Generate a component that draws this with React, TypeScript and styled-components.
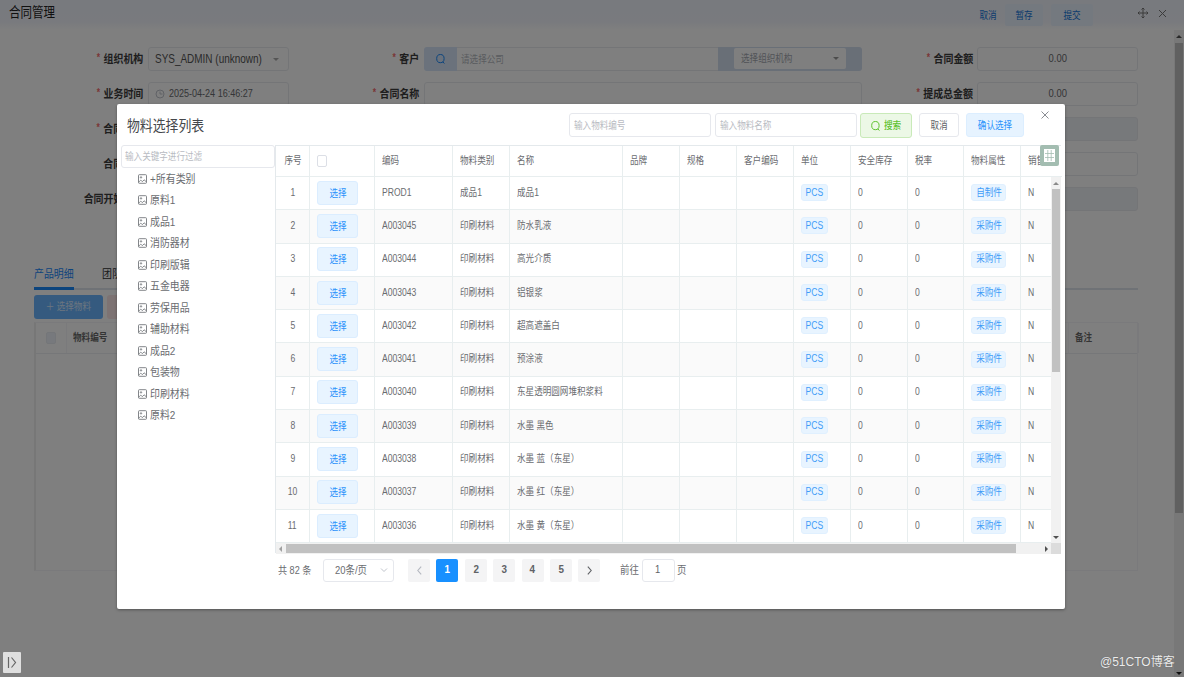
import React from 'react';
import styled, { createGlobalStyle } from 'styled-components';

const Global = createGlobalStyle`
  * { box-sizing: border-box; }
  html, body { margin: 0; padding: 0; overflow: hidden; background: #808080; }
  body { font-family: "Liberation Sans", "Noto Sans CJK SC", sans-serif; color: #6a6c70; }
`;

const T = styled.span<{ $s?: number; $c?: string; $o?: string; $w?: number; $x?: number; $dy?: number }>`
  flex: none;
  display: block;
  white-space: nowrap;
  font-size: ${p => p.$s ?? 10}px;
  line-height: 1.2;
  font-weight: ${p => p.$w ?? 400};
  color: ${p => p.$c ?? 'inherit'};
  transform: translateY(${p => p.$dy ?? 0}px) scaleX(${p => p.$x ?? 0.857});
  transform-origin: ${p => p.$o ?? 'left'} center;
`;

const Screen = styled.div`
  position: relative;
  width: 1184px;
  height: 677px;
  overflow: hidden;
  background: #fff;
`;
const Page = styled.div`display: flex; flex-direction: column; height: 677px;`;
const TopBar = styled.header`
  height: 30px;
  flex: none;
  display: flex;
  align-items: center;
  padding: 0 14px 4px 9px;
  background: linear-gradient(#f0f4fc 0, #f2f5fc 22px, #fff 30px);
  color: #222;
`;
const Grow = styled.div`flex: 1;`;
const BarButton = styled.div<{ $w: number; $bg?: string; $ml?: number }>`
  width: ${p => p.$w}px;
  height: 22px;
  margin: 4px 0 0 ${p => p.$ml ?? 0}px;
  display: flex;
  align-items: center;
  justify-content: center;
  border-radius: 2px;
  background: ${p => p.$bg ?? 'transparent'};
  color: #1477dc;
`;
const BarIcon = styled.svg<{ $ml: number; $mr?: number }>`
  margin-left: ${p => p.$ml}px; margin-right: ${p => p.$mr ?? 0}px; flex: none; display: block;
`;
const Body = styled.div`flex: 1; display: flex; min-height: 0;`;
const Content = styled.div`width: 1174px; padding: 17px 36px 0 34px;`;
const FormGrid = styled.div`
  display: grid;
  grid-template-columns: 255px 573px 276px;
  grid-auto-rows: 35px;
  height: 205px;
`;
const Field = styled.div`display: flex; height: 24px;`;
const FieldLabel = styled.div<{ $w: number; $end?: number }>`
  width: ${p => p.$w}px;
  padding-right: ${p => p.$end ?? 5}px;
  flex: none;
  display: flex;
  align-items: center;
  justify-content: flex-end;
  color: #3c3c3c;
  i { color: #f56c6c; font-style: normal; margin-right: 4px; font-size: 10px; position: relative; top: -2px; }
`;
const Box = styled.div<{ $w: number; $off?: boolean; $center?: boolean }>`
  width: ${p => p.$w}px;
  height: 24px;
  border: 1px solid #e9ebef;
  border-radius: 3px;
  background: ${p => (p.$off ? '#eff2f7' : '#fff')};
  display: flex;
  align-items: center;
  justify-content: ${p => (p.$center ? 'center' : 'flex-start')};
  padding: 0 6px;
`;
const SelectText = styled.div`width: 112px; display: flex; margin-right: 6px;`;
const TimeText = styled.div`margin-left: 4px;`;
const SearchAddon = styled.div`
  width: 33px; height: 24px; background: #d6e4f8; border-radius: 3px 0 0 3px;
  display: flex; align-items: center; justify-content: center;
`;
const GroupInput = styled.div`
  width: 261px; height: 24px; border: 1px solid #e9ebef; border-width: 1px 0; padding-left: 4px;
  display: flex; align-items: center;
`;
const GroupAppend = styled.div`
  width: 144px; height: 24px; padding: 1px 16px; background: #d3deef; border-radius: 0 3px 3px 0;
`;
const GroupSelect = styled.div`
  width: 112px; height: 21px; background: #fff; display: flex; align-items: center;
  justify-content: space-between; padding: 0 7px; border-radius: 2px; overflow: hidden;
`;
const Tabs = styled.div`
  display: flex; height: 38px; border-bottom: 2px solid #dfe4ed; align-items: stretch;
`;
const Tab = styled.div<{ $on?: boolean }>`
  width: 40px;
  height: 38px;
  margin-right: 28px;
  display: flex;
  align-items: center;
  padding-top: 8px;
  border-bottom: 3px solid ${p => (p.$on ? '#1989fa' : 'transparent')};
  color: ${p => (p.$on ? '#1989fa' : '#303133')};
`;
const Actions = styled.div`display: flex; gap: 4px; padding: 5px 0 3px;`;
const PageButton = styled.div<{ $w: number; $bg: string }>`
  width: ${p => p.$w}px; height: 24px; border-radius: 3px; background: ${p => p.$bg};
  display: flex; align-items: center; justify-content: center; color: #d8eaff;
`;
const DetailTable = styled.div`height: 249px; border: 1px solid #f4f5f8; border-left: 2px solid #efefef; width: 1104px;`;
const DetailHead = styled.div`
  display: grid; grid-template-columns: 31px 1002px 70px; height: 31px; border-bottom: 1px solid #eceef2; color: #6a6a6a;
`;
const DetailCell = styled.div<{ $mid?: boolean }>`
  display: flex; align-items: center; padding-left: ${p => (p.$mid ? 0 : 6)}px;
  justify-content: ${p => (p.$mid ? 'center' : 'flex-start')};
  border-right: 1px solid #f4f5f8; overflow: hidden;
`;
const Check = styled.span<{ $grey?: boolean }>`
  width: 10px; height: 12px; border: 1px solid ${p => (p.$grey ? '#e9ecf2' : '#dcdfe6')}; border-radius: 2px;
  background: ${p => (p.$grey ? '#eff3fa' : '#fff')};
`;
const PageScroll = styled.div`
  width: 10px; background: #f1f1f1; display: flex; flex-direction: column; align-items: center;
  justify-content: space-between; padding: 4px 1px 1px; 
`;
const PageThumb = styled.div`width: 8px; height: 470px; background: #c1c1c1; margin-bottom: auto; margin-top: 4px;`;

const Shade = styled.div`position: absolute; inset: 0; background: rgba(0, 0, 0, 0.5);`;
const Dialog = styled.section`
  position: absolute;
  left: 117px;
  top: 104px;
  width: 948px;
  height: 505px;
  background: #fff;
  border-radius: 2px;
  box-shadow: 0 1px 3px rgba(0, 0, 0, 0.35);
  display: flex;
  flex-direction: column;
`;
const DialogHead = styled.div`height: 41px; display: flex; padding: 9px 15px 0 10px; flex: none;`;
const DialogTitle = styled.div`width: 442px; height: 25px; display: flex; align-items: center; color: #45474b;`;
const Input = styled.div<{ $w: number; $h?: number; $mr?: number; $pl?: number }>`
  width: ${p => p.$w}px; height: ${p => p.$h ?? 24}px; margin-right: ${p => p.$mr ?? 0}px;
  border: 1px solid #e6e8ed; border-radius: 3px; padding-left: ${p => p.$pl ?? 4}px;
  display: flex; align-items: center; color: #b8bbc2; flex: none;
`;
const Button = styled.div<{ $w: number; $bg: string; $bd: string; $c: string; $mr?: number; $h?: number }>`
  width: ${p => p.$w}px; height: ${p => p.$h ?? 24}px; margin-right: ${p => p.$mr ?? 0}px;
  background: ${p => p.$bg}; border: 1px solid ${p => p.$bd}; color: ${p => p.$c};
  border-radius: 3px; display: flex; align-items: center; justify-content: center; flex: none;
`;
const SearchLabel = styled.div`display: flex; align-items: center; gap: 4px; width: 31px;`;
const Close = styled.svg`display: block; margin: -2px 0 0 17px; flex: none;`;
const DialogBody = styled.div`display: flex; padding-left: 4px; flex: 1;`;
const Side = styled.aside`width: 154px; flex: none;`;
const Tree = styled.ul`list-style: none; margin: 0; padding: 0 0 0 17px;`;
const TreeItem = styled.li`height: 21.5px; display: flex; align-items: center; gap: 3px; color: #6a6c70;`;
const Main = styled.div`width: 786px;`;
const TableFrame = styled.div`
  position: relative; height: 408px; border-left: 1px solid #e4e9ec; border-top: 1px solid #e4e9ec;
`;
const cols = '34px 65px 78px 57px 113px 57px 57px 57px 57px 57px 56px 57px';
const Row = styled.div<{ $odd?: boolean; $head?: boolean }>`
  display: grid;
  grid-template-columns: ${cols} ${p => (p.$head ? 41 : 31)}px;
  height: ${p => (p.$head ? 31 : 33.3)}px;
  background: ${p => (p.$odd ? '#fafafa' : '#fff')};
  color: #6a6c70;
`;
const Cell = styled.div<{ $mid?: boolean; $last?: boolean }>`
  display: flex;
  align-items: center;
  padding: 0 ${p => (p.$mid ? 0 : 7)}px 1px;
  justify-content: ${p => (p.$mid ? 'center' : 'flex-start')};
  border-right: ${p => (p.$last ? 0 : 1)}px solid #e8eeef;
  border-bottom: 1px solid #e8eeef;
  overflow: hidden;
`;
const Tag = styled.span<{ $w: number }>`
  width: ${p => p.$w}px; height: 17px; background: #e8f4ff; border: 1px solid #e0f0ff; border-radius: 3px;
  display: flex; align-items: center; justify-content: center; color: #3f9cf8;
`;
const Scroller = styled.div`display: flex; height: 366px;`;
const Rows = styled.div`width: 775px;`;
const VBar = styled.div`
  width: 10px; background: #f1f1f1; display: flex; flex-direction: column; align-items: center; padding: 4px 0 3px;
`;
const VThumb = styled.div`width: 8px; height: 183px; background: #c1c1c1; margin: 3px 0 auto;`;
const HBar = styled.div`height: 11px; background: #f1f1f1; display: flex; align-items: center; padding-left: 2px;`;
const HThumb = styled.div`width: 730px; height: 9px; background: #c1c1c1; margin: 0 28px 0 3px;`;
const Corner = styled.div`width: 10px; height: 11px; background: #dcdcdc; margin-left: auto;`;
const ColumnTool = styled.div`
  position: absolute; left: 764px; top: -1px; width: 19px; height: 21px; border-radius: 2px; background: #a3bdb1;
  display: flex; align-items: center; justify-content: center;
`;
const Pager = styled.div`display: flex; height: 24px; margin-top: 5px; padding-left: 3px; align-items: center; color: #6a6c70;`;
const PagerText = styled.div<{ $w: number; $ml?: number }>`
  width: ${p => p.$w}px; margin-left: ${p => p.$ml ?? 0}px; display: flex; flex: none;
`;
const SizeSelect = styled.div`
  width: 71px; height: 23px; border: 1px solid #e6e8ed; border-radius: 3px; margin-right: 14px;
  display: flex; align-items: center; justify-content: space-between; padding: 0 5px 0 11px; flex: none;
`;
const PageNo = styled.div<{ $on?: boolean }>`
  width: 22px; height: 23px; margin-right: 6.4px; border-radius: 2px; flex: none;
  background: ${p => (p.$on ? '#1890ff' : '#f4f4f5')}; color: ${p => (p.$on ? '#fff' : '#606266')};
  display: flex; align-items: center; justify-content: center;
`;
const Expand = styled.div`
  position: absolute; left: 3px; top: 652px; width: 18px; height: 21px; background: #dfdfdf; border-radius: 1px;
  display: flex; align-items: center; justify-content: center;
`;
const Watermark = styled.div`position: absolute; left: 1100px; top: 655px; color: #ececec; text-shadow: 0 0 1px #555;`;

const ArrowMark = styled.svg`flex: none; display: block;`;
const Arrow = ({ d, c = '#505050' }: { d: 'u' | 'd' | 'l' | 'r'; c?: string }) => {
  const path = { u: 'M0 4L3 1L6 4Z', d: 'M0 1L3 4L6 1Z', l: 'M4 0L1 3L4 6Z', r: 'M1 0L4 3L1 6Z' }[d];
  const flat = d === 'u' || d === 'd';
  return (
    <ArrowMark width={flat ? 6 : 5} height={flat ? 5 : 6}>
      <path d={path} fill={c} />
    </ArrowMark>
  );
};
const Chevron = ({ d, c = '#606266', s = 8 }: { d: string; c?: string; s?: number }) => (
  <svg width={s} height={s} viewBox="0 0 8 8" fill="none" stroke={c} strokeWidth="1">
    <path d={d} />
  </svg>
);
const IconSlot = styled.svg`flex: none; display: block;`;
const Magnifier = ({ c }: { c: string }) => (
  <IconSlot width="9" height="10" viewBox="0 0 9 10" fill="none" stroke={c} strokeWidth="1">
    <ellipse cx="4.4" cy="4.6" rx="3.7" ry="4.1" />
    <path d="M6.8 7.7L8.4 9.6" />
  </IconSlot>
);
const Picture = () => (
  <IconSlot width="9" height="10" viewBox="0 0 9 10" fill="none" stroke="#75787d" strokeWidth="0.9">
    <rect x="0.5" y="0.7" width="8" height="8.6" rx="0.8" />
    <circle cx="3" cy="3.4" r="0.7" />
    <path d="M0.8 8.4C2 6 3 5.8 4.4 7.6L6.1 5.8L8.3 7.8" />
  </IconSlot>
);

const Label = ({ w, text, req, end }: { w: number; text: string; req?: boolean; end?: number }) => (
  <FieldLabel $w={w} $end={end}>
    <T $s={11.6} $w={700} $o="right">{req && <i>*</i>}{text}</T>
  </FieldLabel>
);

const tree = ['+所有类别', '原料1', '成品1', '消防器材', '印刷版辑', '五金电器', '劳保用品', '辅助材料', '成品2', '包装物', '印刷材料', '原料2'];
const heads = ['编码', '物料类别', '名称', '品牌', '规格', '客户编码', '单位', '安全库存', '税率', '物料属性', '销售'];
const rows: [string, string, string, string][] = [
  ['PROD1', '成品1', '成品1', '自制件'],
  ['A003045', '印刷材料', '防水乳液', '采购件'],
  ['A003044', '印刷材料', '高光介质', '采购件'],
  ['A003043', '印刷材料', '铝银浆', '采购件'],
  ['A003042', '印刷材料', '超高遮盖白', '采购件'],
  ['A003041', '印刷材料', '预涂液', '采购件'],
  ['A003040', '印刷材料', '东星透明圆网堆积浆料', '采购件'],
  ['A003039', '印刷材料', '水墨 黑色', '采购件'],
  ['A003038', '印刷材料', '水墨 蓝（东星）', '采购件'],
  ['A003037', '印刷材料', '水墨 红（东星）', '采购件'],
  ['A003036', '印刷材料', '水墨 黄（东星）', '采购件'],
];

const ContractPage = () => (
  <Page>
    <TopBar>
      <T $s={13.4}>合同管理</T>
      <Grow />
      <BarButton $w={34}><T $o="center" $dy={1}>取消</T></BarButton>
      <BarButton $w={38} $bg="#e9f2fe"><T $o="center" $dy={1}>暂存</T></BarButton>
      <BarButton $w={42} $bg="#e9f2fe" $ml={8}><T $o="center" $dy={1}>提交</T></BarButton>
      <BarIcon $ml={44} width="12" height="12" viewBox="0 0 12 12" fill="none" stroke="#777" strokeWidth="1">
        <path d="M6 1V11M1 6H11M4.5 2.5L6 1L7.5 2.5M4.5 9.5L6 11L7.5 9.5M2.5 4.5L1 6L2.5 7.5M9.5 4.5L11 6L9.5 7.5" />
      </BarIcon>
      <BarIcon $ml={9} $mr={3} width="9" height="9" viewBox="0 0 9 9" stroke="#777" strokeWidth="1">
        <path d="M1 1L8 8M8 1L1 8" />
      </BarIcon>
    </TopBar>
    <Body>
      <Content>
        <FormGrid>
          <Field>
            <Label w={114} text="组织机构" req />
            <Box $w={142}><SelectText><T $s={12} $x={0.83} $c="#555">SYS_ADMIN (unknown)</T></SelectText><Arrow d="d" c="#aaa" /></Box>
          </Field>
          <Field>
            <Label w={135} text="客户" req />
            <SearchAddon><Magnifier c="#1989fa" /></SearchAddon>
            <GroupInput><T $c="#b4b8c0" $dy={1}>请选择公司</T></GroupInput>
            <GroupAppend><GroupSelect><T $c="#a4a8b0">选择组织机构</T><Arrow d="d" c="#999" /></GroupSelect></GroupAppend>
          </Field>
          <Field><Label w={115} text="合同金额" req end={4} /><Box $w={161} $center><T $s={11} $o="center">0.00</T></Box></Field>

          <Field>
            <Label w={114} text="业务时间" req />
            <Box $w={142}>
              <IconSlot width="10" height="10" viewBox="0 0 10 10" fill="none" stroke="#c0c4cc"><circle cx="5" cy="5" r="4" /><path d="M5 2.5V5H7.5" /></IconSlot>
              <TimeText><T $s={11} $x={0.82}>2025-04-24 16:46:27</T></TimeText>
            </Box>
          </Field>
          <Field><Label w={135} text="合同名称" req /><Box $w={438} /></Field>
          <Field><Label w={115} text="提成总金额" req end={4} /><Box $w={161} $center><T $s={11} $o="center">0.00</T></Box></Field>

          <Field><Label w={114} text="合同" req end={25} /></Field>
          <Field />
          <Field><Label w={117} text="" /><Box $w={159} $off /></Field>
          <Field><Label w={114} text="合同" end={25} /></Field>
          <Field />
          <Field><Label w={117} text="" /><Box $w={159} /></Field>
          <Field><Label w={114} text="合同开始" end={25} /></Field>
          <Field />
          <Field><Label w={117} text="" /><Box $w={159} $off /></Field>
        </FormGrid>
        <Tabs>
          <Tab $on><T $s={11.6}>产品明细</T></Tab>
          <Tab><T $s={11.6}>团队</T></Tab>
        </Tabs>
        <Actions>
          <PageButton $w={69} $bg="#6bb5ff"><T $o="center">＋ 选择物料</T></PageButton>
          <PageButton $w={50} $bg="#fbe6e6" />
        </Actions>
        <DetailTable>
          <DetailHead>
            <DetailCell $mid><Check $grey /></DetailCell>
            <DetailCell><T $w={700}>物料编号</T></DetailCell>
            <DetailCell><T $w={700}>备注</T></DetailCell>
          </DetailHead>
        </DetailTable>
      </Content>
      <PageScroll><Arrow d="u" /><PageThumb /><Arrow d="d" c="#222" /></PageScroll>
    </Body>
  </Page>
);

export default function App() {
  return (
    <Screen>
      <Global />
      <ContractPage />
      <Shade />
      <Dialog>
        <DialogHead>
          <DialogTitle><T $s={15}>物料选择列表</T></DialogTitle>
          <Input $w={142} $mr={4}><T $dy={1}>输入物料编号</T></Input>
          <Input $w={142} $mr={3}><T $dy={1}>输入物料名称</T></Input>
          <Button $w={52} $bg="#ecf8e6" $bd="#c9eab9" $c="#5ec22f" $mr={7} $h={25}>
            <SearchLabel><Magnifier c="#5ec22f" /><T $w={500}>搜索</T></SearchLabel>
          </Button>
          <Button $w={40} $bg="#fff" $bd="#e6e8ed" $c="#606266" $mr={7}><T $o="center" $dy={1}>取消</T></Button>
          <Button $w={58} $bg="#e6f3ff" $bd="#dceeff" $c="#2a92fb"><T $o="center" $dy={1}>确认选择</T></Button>
          <Close width="8" height="8" viewBox="0 0 8 8" stroke="#8a8d93" strokeWidth="1">
            <path d="M0.5 0.5L7.5 7.5M7.5 0.5L0.5 7.5" />
          </Close>
        </DialogHead>
        <DialogBody>
          <Side>
            <Input $w={154} $h={23} $pl={3}><T>输入关键字进行过滤</T></Input>
            <Tree>
              {tree.map(t => <TreeItem key={t}><Picture /><T $s={11.6}>{t}</T></TreeItem>)}
            </Tree>
          </Side>
          <Main>
            <TableFrame>
              <Row $head>
                <Cell $mid><T $o="center">序号</T></Cell>
                <Cell><Check /></Cell>
                {heads.map((h, i) => <Cell key={h} $last={i === 10}><T>{h}</T></Cell>)}
              </Row>
              <Scroller>
                <Rows>
                  {rows.map((r, i) => (
                    <Row key={r[0]} $odd={i % 2 === 1}>
                      <Cell $mid><T $o="center">{i + 1}</T></Cell>
                      <Cell>
                        <Button $w={41} $bg="#e8f4ff" $bd="#dbedff" $c="#2a92fb"><T $o="center" $dy={0.5}>选择</T></Button>
                      </Cell>
                      <Cell><T>{r[0]}</T></Cell>
                      <Cell><T>{r[1]}</T></Cell>
                      <Cell><T>{r[2]}</T></Cell>
                      <Cell /><Cell /><Cell />
                      <Cell><Tag $w={27}><T $o="center">PCS</T></Tag></Cell>
                      <Cell><T>0</T></Cell>
                      <Cell><T>0</T></Cell>
                      <Cell><Tag $w={35}><T $o="center">{r[3]}</T></Tag></Cell>
                      <Cell $last><T>N</T></Cell>
                    </Row>
                  ))}
                </Rows>
                <VBar><Arrow d="u" c="#8a8a8a" /><VThumb /><Arrow d="d" /></VBar>
              </Scroller>
              <HBar><Arrow d="l" c="#a0a0a0" /><HThumb /><Arrow d="r" /><Corner /></HBar>
              <ColumnTool>
                <IconSlot width="11" height="13" viewBox="0 0 11 13">
                  <rect width="11" height="13" fill="#fff" />
                  <path d="M3.8 1V12M7.2 1V12M1 4.5H10M1 8.5H10" fill="none" stroke="#a3bdb1" strokeWidth="0.8" />
                </IconSlot>
              </ColumnTool>
            </TableFrame>
            <Pager>
              <PagerText $w={45}><T $s={10.6}>共 82 条</T></PagerText>
              <SizeSelect><T $s={11} $dy={1}>20条/页</T><Chevron d="M1 2.5L4 5.5L7 2.5" c="#c0c4cc" /></SizeSelect>
              <PageNo><Chevron d="M5.5 0.5L2.5 4L5.5 7.5" c="#b4b8c0" s={9} /></PageNo>
              {[1, 2, 3, 4, 5].map(n => <PageNo key={n} $on={n === 1}><T $s={11.5} $w={700} $o="center">{n}</T></PageNo>)}
              <PageNo><Chevron d="M2.5 0.5L5.5 4L2.5 7.5" s={9} /></PageNo>
              <PagerText $w={22} $ml={13}><T $s={11} $dy={1}>前往</T></PagerText>
              <Input $w={33} $h={23} $mr={2} $pl={12}><T $s={11} $c="#606266">1</T></Input>
              <T $s={11} $dy={1}>页</T>
            </Pager>
          </Main>
        </DialogBody>
      </Dialog>
      <Expand>
        <IconSlot width="12" height="13" viewBox="0 0 12 13" fill="none" stroke="#666" strokeWidth="1.2">
          <path d="M2.5 1V12M5.5 1.5L9.5 6.5L5.5 11.5" />
        </IconSlot>
      </Expand>
      <Watermark><T $s={12} $x={1}>@51CTO博客</T></Watermark>
    </Screen>
  );
}
